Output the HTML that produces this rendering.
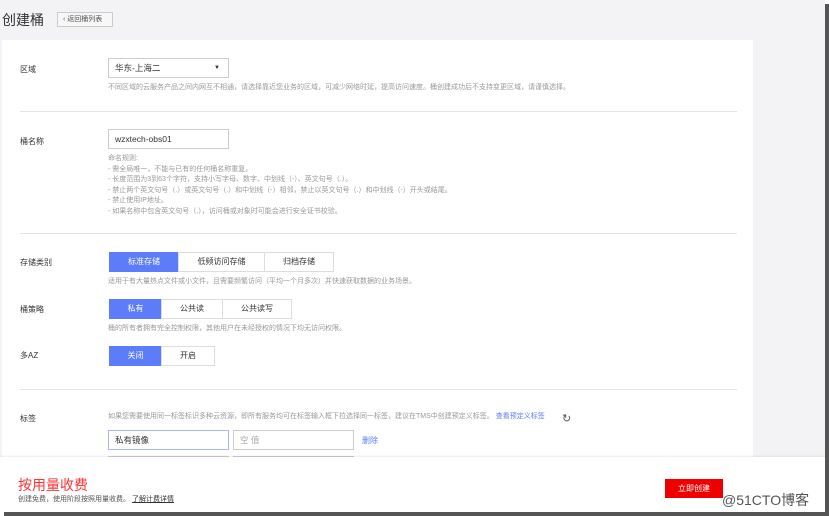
<!DOCTYPE html>
<html><head><meta charset="utf-8"><style>
*{margin:0;padding:0;box-sizing:border-box}
body{width:829px;height:516px;overflow:hidden;background:#fff;font-family:"Liberation Sans","Noto Sans CJK SC",sans-serif;position:relative}
.frame{position:absolute;left:0;top:0;width:825px;height:512px;background:#f3f3f5;overflow:hidden}
.sh-r{position:absolute;left:825px;top:4px;width:4px;height:512px;background:#555}
.sh-b{position:absolute;left:4px;top:512px;width:825px;height:4px;background:#555}
.title{position:absolute;left:2px;top:10px;font-size:14px;color:#333}
.back{position:absolute;left:57px;top:12px;width:56px;height:15px;border:1px solid #ccc;background:#f7f7f7;font-size:7px;color:#555;line-height:13px;padding-left:5px}
.card{position:absolute;left:2px;top:40px;width:751px;height:420px;background:#fff}
.a{position:absolute;font-size:8px;color:#333}
.h{position:absolute;font-size:7px;color:#999;line-height:10.5px;white-space:nowrap}
.hr{position:absolute;left:18px;width:717px;height:1px;background:#e5e5e5}
.in{position:absolute;border:1px solid #ccc;height:20px;font-size:8.5px;color:#333;line-height:18px;padding-left:6px;background:#fff}
.seg{position:absolute;display:flex;height:20px}
.seg div{border:1px solid #ddd;font-size:8px;color:#333;line-height:18px;text-align:center;margin-left:-1px}
.seg .on{background:#5c7cfa;border-color:#5c7cfa;color:#fff}
.bar{position:absolute;left:0;top:457px;width:825px;height:55px;background:#fff;box-shadow:0 -1px 2px rgba(0,0,0,.08)}
</style></head><body>
<div class="frame">
<div class="title">创建桶</div>
<div class="back">‹ 返回桶列表</div>
<div class="card">
<div class="a" style="left:18px;top:24px">区域</div>
<div class="in" style="left:106px;top:18px;width:121px">华东-上海二<span style="position:absolute;right:8px;font-size:6px">▼</span></div>
<div class="h" style="left:106px;top:43px">不同区域的云服务产品之间内网互不相通，请选择靠近您业务的区域，可减少网络时延，提高访问速度。桶创建成功后不支持变更区域，请谨慎选择。</div>
<div class="hr" style="top:71px"></div>
<div class="a" style="left:18px;top:96px">桶名称</div>
<div class="in" style="left:106px;top:89px;width:121px">wzxtech-obs01</div>
<div class="h" style="left:106px;top:114px">命名规则:<br>- 需全局唯一，不能与已有的任何桶名称重复。<br>- 长度范围为3到63个字符，支持小写字母、数字、中划线（-）、英文句号（.）。<br>- 禁止两个英文句号（.）或英文句号（.）和中划线（-）相邻，禁止以英文句号（.）和中划线（-）开头或结尾。<br>- 禁止使用IP地址。<br>- 如果名称中包含英文句号（.），访问桶或对象时可能会进行安全证书校验。</div>
<div class="hr" style="top:193px"></div>
<div class="a" style="left:18px;top:217px">存储类别</div>
<div class="seg" style="left:108px;top:212px"><div class="on" style="width:70px">标准存储</div><div style="width:87px">低频访问存储</div><div style="width:70px">归档存储</div></div>
<div class="h" style="left:106px;top:237px">适用于有大量热点文件或小文件，且需要频繁访问（平均一个月多次）并快速获取数据的业务场景。</div>
<div class="a" style="left:18px;top:264px">桶策略</div>
<div class="seg" style="left:108px;top:259px"><div class="on" style="width:53px">私有</div><div style="width:62px">公共读</div><div style="width:70px">公共读写</div></div>
<div class="h" style="left:106px;top:284px">桶的所有者拥有完全控制权限，其他用户在未经授权的情况下均无访问权限。</div>
<div class="a" style="left:18px;top:310px">多AZ</div>
<div class="seg" style="left:108px;top:306px"><div class="on" style="width:53px">关闭</div><div style="width:54px">开启</div></div>
<div class="hr" style="top:349px"></div>
<div class="a" style="left:18px;top:373px">标签</div>
<div class="h" style="left:106px;top:372px">如果您需要使用同一标签标识多种云资源，即所有服务均可在标签输入框下拉选择同一标签，建议在TMS中创建预定义标签。 <span style="color:#5c7cfa">查看预定义标签</span></div>
<div style="position:absolute;left:560px;top:372px;font-size:11px;color:#555">↻</div>
<div class="in" style="left:106px;top:390px;width:121px;border-color:#a8b8f8">私有镜像</div>
<div class="in" style="left:231px;top:390px;width:121px;color:#aaa">空 值</div>
<div class="a" style="left:360px;top:395px;color:#5c7cfa">删除</div>
<div class="in" style="left:106px;top:416px;width:121px;background:#f3f3f3"></div>
<div class="in" style="left:231px;top:416px;width:121px;background:#f3f3f3"></div>
</div>
<div class="bar">
<div style="position:absolute;left:18px;top:18px;font-size:14px;color:#f33">按用量收费</div>
<div style="position:absolute;left:18px;top:37px;font-size:7px;color:#555">创建免费，使用阶段按照用量收费。 <span style="text-decoration:underline;color:#333">了解计费详情</span></div>
<div style="position:absolute;left:665px;top:22px;width:58px;height:19px;background:#e00;color:#fff;font-size:8px;text-align:center;line-height:19px">立即创建</div>
<div style="position:absolute;left:722px;top:33px;font-size:14px;color:#555">@51CTO博客</div>
</div>
</div>
<div class="sh-r"></div><div class="sh-b"></div>
</body></html>
